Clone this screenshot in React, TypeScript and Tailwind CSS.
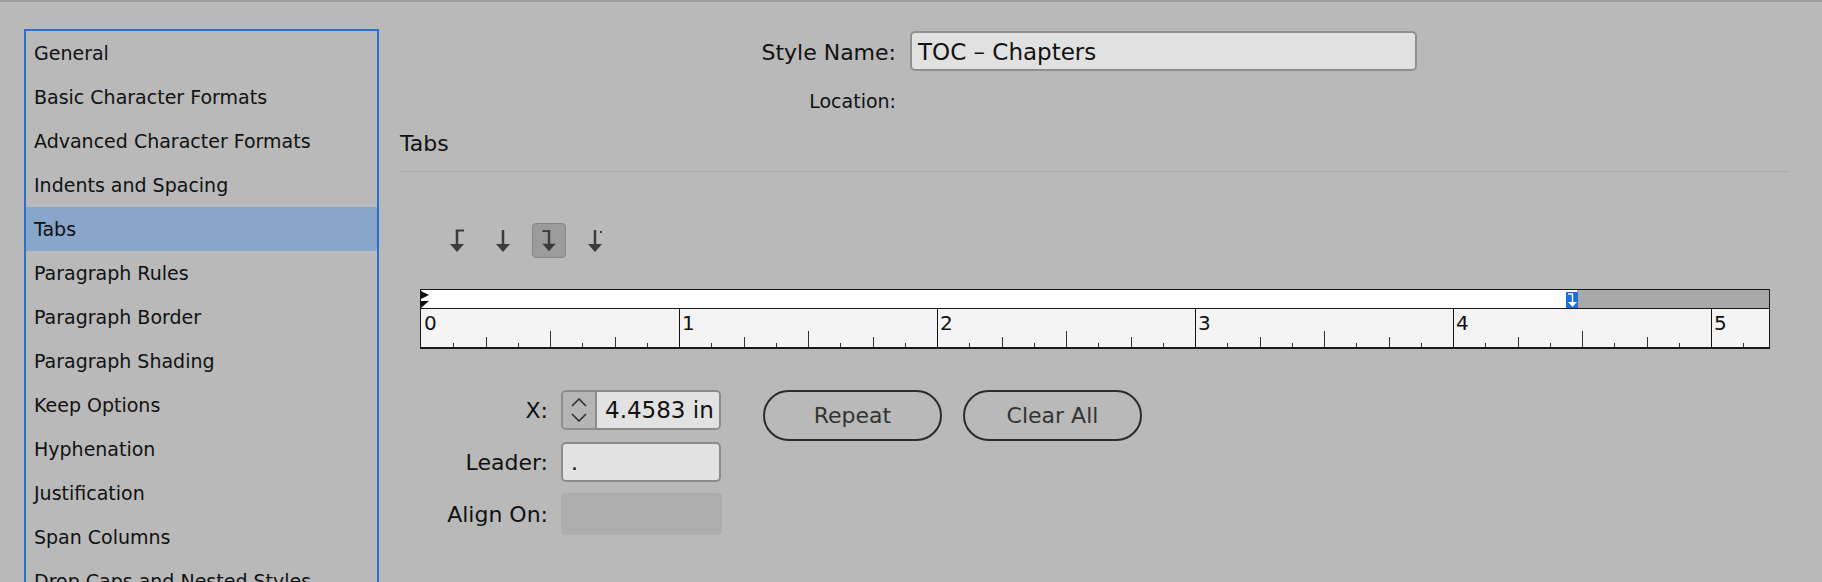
const sections = [
  "General",
  "Basic Character Formats",
  "Advanced Character Formats",
  "Indents and Spacing",
  "Tabs",
  "Paragraph Rules",
  "Paragraph Border",
  "Paragraph Shading",
  "Keep Options",
  "Hyphenation",
  "Justification",
  "Span Columns",
  "Drop Caps and Nested Styles",
];

const INCH = 258;

function TabIcon({ kind }: { kind: "left" | "center" | "right" | "decimal" }) {
  return (
    <svg width="34" height="35" viewBox="0 0 34 35">
      <line x1="17" y1="7" x2="17" y2="23" stroke="#3b3b3b" strokeWidth="2.5" />
      <polygon points="10,21 24,21 17,29" fill="#3b3b3b" />
      {kind === "left" && (
        <line x1="15.75" y1="7.5" x2="24" y2="7.5" stroke="#3b3b3b" strokeWidth="2" />
      )}
      {kind === "right" && (
        <line x1="10" y1="7.5" x2="18.25" y2="7.5" stroke="#3b3b3b" strokeWidth="2" />
      )}
      {kind === "decimal" && <rect x="22" y="8" width="2" height="2" fill="#3b3b3b" />}
    </svg>
  );
}

function RulerScale() {
  const ticks = [];
  for (let i = 0; i <= 5 * 8 + 2; i++) {
    const x = Math.round(i * (INCH / 8)) + 0.5;
    if (x > 1349) break;
    const r = i % 8;
    if (r === 0) {
      if (i > 0) ticks.push(<line key={i} x1={x} y1="0" x2={x} y2="38" stroke="#111" strokeWidth="1" />);
      continue;
    }
    const y = r === 4 ? 22 : r % 2 === 0 ? 28 : 34;
    ticks.push(<line key={i} x1={x} y1={y} x2={x} y2="38" stroke="#333" strokeWidth="1" />);
  }
  return (
    <svg width="1348" height="38" className="block">
      {ticks}
      {[0, 1, 2, 3, 4, 5].map((n) => (
        <text
          key={n}
          x={n * INCH + 3}
          y="21"
          fontSize="20"
          fontFamily="DejaVu Sans, sans-serif"
          fill="#111"
        >
          {n}
        </text>
      ))}
    </svg>
  );
}

export default function App() {
  return (
    <div className="w-[1822px] h-[582px] overflow-hidden bg-[#b9b9b9] border-t-2 border-[#9e9e9e] flex font-['DejaVu_Sans',sans-serif] text-[#111]">
      {/* Sidebar list */}
      <div className="ml-[24px] mt-[27px] w-[355px] h-[600px] border-2 border-b-0 border-[#2f6dd0] shrink-0">
        {sections.map((s) => (
          <div
            key={s}
            className={
              "h-[44px] flex items-center pl-[8px] text-[19px] whitespace-nowrap " +
              (s === "Tabs" ? "bg-[#88a6ca]" : "")
            }
          >
            {s}
          </div>
        ))}
      </div>

      {/* Main panel */}
      <div className="ml-[21px] flex-1 flex flex-col">
        <div className="mt-[29px] flex items-center">
          <div className="w-[496px] text-right text-[22px] pt-[2px]">Style Name:</div>
          <div className="ml-[14px] w-[507px] h-[40px] bg-[#e1e1e1] border-2 border-[#8f8f8f] rounded-[5px] flex items-center pl-[6px] pt-[2px] text-[23px]">
            TOC – Chapters
          </div>
        </div>
        <div className="mt-[18px] h-[24px] flex items-center">
          <div className="w-[496px] text-right text-[19px]">Location:</div>
        </div>
        <div className="mt-[17px] h-[26px] flex items-center text-[22px]">Tabs</div>
        <div className="mt-[15px] w-[1389px] h-px bg-[#acacac]" />

        {/* Tab alignment buttons */}
        <div className="mt-[51px] ml-[40px] flex gap-[12px]">
          <div className="w-[34px] h-[35px]">
            <TabIcon kind="left" />
          </div>
          <div className="w-[34px] h-[35px]">
            <TabIcon kind="center" />
          </div>
          <div className="w-[34px] h-[35px] rounded-[4px] bg-[#9b9b9b] border border-[#858585] flex items-center justify-center">
            <TabIcon kind="right" />
          </div>
          <div className="w-[34px] h-[35px]">
            <TabIcon kind="decimal" />
          </div>
        </div>

        {/* Ruler */}
        <div className="mt-[31px] ml-[20px] w-[1350px] border border-b-2 border-[#1a1a1a] flex flex-col">
          <div className="h-[18px] flex relative">
            <div className="flex-1 bg-white" />
            <div className="w-[192px] bg-[#a9a9a9]" />
            <svg width="9" height="18" className="absolute left-0 top-0">
              <polygon points="0,1 8,5 0,9" fill="#111" />
              <polygon points="0,11 8,11 0,18" fill="#111" />
            </svg>
            <div className="absolute left-[1145px] top-[2px] w-[12px] h-[16px] bg-[#1d6fe0]">
              <svg width="12" height="16" viewBox="0 0 12 16">
                <line x1="2" y1="2" x2="7" y2="2" stroke="#fff" strokeWidth="1.5" />
                <line x1="6.5" y1="2" x2="6.5" y2="11" stroke="#fff" strokeWidth="1.5" />
                <polygon points="2,10 11,10 6.5,15" fill="#fff" />
              </svg>
            </div>
          </div>
          <div className="h-px bg-[#1a1a1a]" />
          <div className="h-[38px] bg-[#f4f4f4]">
            <RulerScale />
          </div>
        </div>

        {/* Position fields and buttons */}
        <div className="mt-[41px] flex items-start">
          <div className="flex flex-col">
            <div className="flex items-center h-[40px]">
              <div className="w-[148px] text-right text-[22px]">X:</div>
              <div className="ml-[13px] w-[160px] h-[40px] border-2 border-[#8c8c8c] rounded-[5px] overflow-hidden flex">
                <div className="w-[34px] bg-[#b5b5b5] border-r-2 border-[#8c8c8c] flex items-center justify-center">
                  <svg width="18" height="34" viewBox="0 0 18 34">
                    <polyline points="2,13 9,6 16,13" fill="none" stroke="#333" strokeWidth="1.6" />
                    <polyline points="2,21 9,28 16,21" fill="none" stroke="#333" strokeWidth="1.6" />
                  </svg>
                </div>
                <div className="flex-1 bg-[#e2e2e2] flex items-center pl-[8px] text-[23px] whitespace-nowrap overflow-hidden">
                  4.4583 in
                </div>
              </div>
            </div>
            <div className="flex items-center h-[40px] mt-[12px]">
              <div className="w-[148px] text-right text-[22px]">Leader:</div>
              <div className="ml-[13px] w-[160px] h-[40px] border-2 border-[#8c8c8c] rounded-[5px] bg-[#e2e2e2] flex items-center pl-[8px] text-[22px]">
                .
              </div>
            </div>
            <div className="flex items-center h-[42px] mt-[11px]">
              <div className="w-[148px] text-right text-[22px]">Align On:</div>
              <div className="ml-[13px] w-[161px] h-[42px] rounded-[4px] bg-[#adadad]" />
            </div>
          </div>
          <div className="ml-[41px] flex gap-[21px]">
            <button className="w-[179px] h-[51px] rounded-full border-2 border-[#2b2b2b] text-[22px] text-[#333]">
              Repeat
            </button>
            <button className="w-[179px] h-[51px] rounded-full border-2 border-[#2b2b2b] text-[22px] text-[#333]">
              Clear All
            </button>
          </div>
        </div>
      </div>
    </div>
  );
}
